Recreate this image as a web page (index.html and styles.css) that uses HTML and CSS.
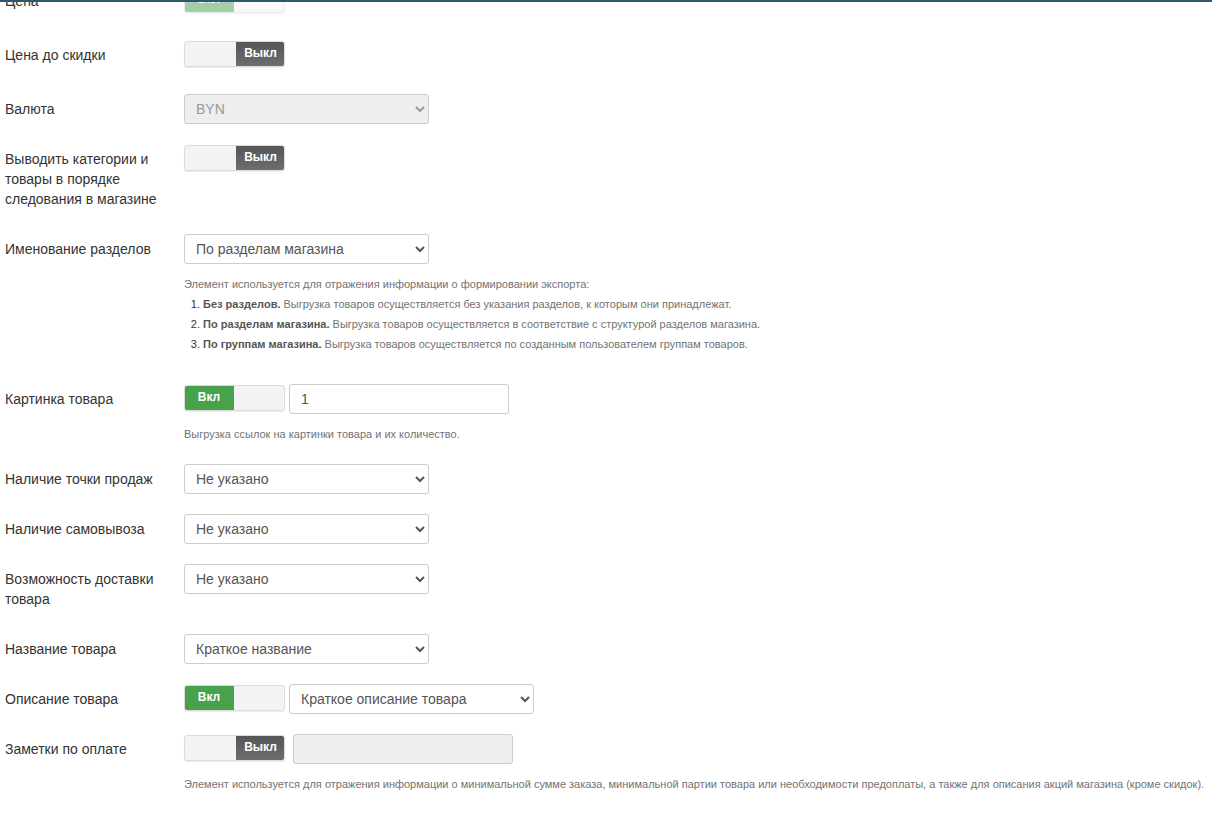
FILE: index.html
```html
<!DOCTYPE html>
<html lang="ru">
<head>
<meta charset="utf-8">
<title>Настройки экспорта</title>
<link rel="stylesheet" href="styles.css">
</head>
<body>
<div class="topline"></div>
<form class="form">
  <div class="row row--toggle">
    <label class="label">Цена</label>
    <div class="control">
      <div class="toggle toggle--on toggle--disabled"><span class="toggle__on">Вкл</span><span class="toggle__blank"></span></div>
    </div>
  </div>

  <div class="row row--toggle">
    <label class="label">Цена до скидки</label>
    <div class="control">
      <div class="toggle toggle--off"><span class="toggle__blank"></span><span class="toggle__off">Выкл</span></div>
    </div>
  </div>

  <div class="row">
    <label class="label">Валюта</label>
    <div class="control">
      <select class="select select--disabled" disabled><option>BYN</option></select>
    </div>
  </div>

  <div class="row">
    <label class="label">Выводить категории и товары в порядке следования в магазине</label>
    <div class="control">
      <div class="toggle toggle--off"><span class="toggle__blank"></span><span class="toggle__off">Выкл</span></div>
    </div>
  </div>

  <div class="row">
    <label class="label">Именование разделов</label>
    <div class="control">
      <select class="select"><option>По разделам магазина</option></select>
      <div class="help">
        <div>Элемент используется для отражения информации о формировании экспорта:</div>
        <ol class="help__list">
          <li><b>Без разделов.</b> Выгрузка товаров осуществляется без указания разделов, к которым они принадлежат.</li>
          <li><b>По разделам магазина.</b> Выгрузка товаров осуществляется в соответствие с структурой разделов магазина.</li>
          <li><b>По группам магазина.</b> Выгрузка товаров осуществляется по созданным пользователем группам товаров.</li>
        </ol>
      </div>
    </div>
  </div>

  <div class="row">
    <label class="label">Картинка товара</label>
    <div class="control">
      <div class="line">
        <div class="toggle toggle--on"><span class="toggle__on">Вкл</span><span class="toggle__blank"></span></div>
        <input class="input" type="text" value="1">
      </div>
      <div class="help">Выгрузка ссылок на картинки товара и их количество.</div>
    </div>
  </div>

  <div class="row">
    <label class="label">Наличие точки продаж</label>
    <div class="control">
      <select class="select"><option>Не указано</option></select>
    </div>
  </div>

  <div class="row">
    <label class="label">Наличие самовывоза</label>
    <div class="control">
      <select class="select"><option>Не указано</option></select>
    </div>
  </div>

  <div class="row">
    <label class="label">Возможность доставки товара</label>
    <div class="control">
      <select class="select"><option>Не указано</option></select>
    </div>
  </div>

  <div class="row">
    <label class="label">Название товара</label>
    <div class="control">
      <select class="select"><option>Краткое название</option></select>
    </div>
  </div>

  <div class="row">
    <label class="label">Описание товара</label>
    <div class="control">
      <div class="line">
        <div class="toggle toggle--on"><span class="toggle__on">Вкл</span><span class="toggle__blank"></span></div>
        <select class="select"><option>Краткое описание товара</option></select>
      </div>
    </div>
  </div>

  <div class="row">
    <label class="label">Заметки по оплате</label>
    <div class="control">
      <div class="line line--wide">
        <div class="toggle toggle--off"><span class="toggle__blank"></span><span class="toggle__off">Выкл</span></div>
        <input class="input input--disabled" type="text" disabled>
      </div>
      <div class="help help--nowrap">Элемент используется для отражения информации о минимальной сумме заказа, минимальной партии товара или необходимости предоплаты, а также для описания акций магазина (кроме скидок).</div>
    </div>
  </div>
</form>
</body>
</html>
```

FILE: styles.css
```css
html, body {
  margin: 0;
  padding: 0;
  background: #fff;
  overflow: hidden;
}

body {
  font-family: "Liberation Sans", Arial, sans-serif;
  font-size: 14px;
  color: #333;
}

.topline {
  position: fixed;
  top: 0;
  left: 0;
  right: 0;
  height: 2px;
  background: #2b5a6d;
  z-index: 5;
}

.form {
  margin-top: -14px;
  padding: 0 5px;
}

.row {
  display: flex;
  gap: 15px;
  margin-bottom: 20px;
}

.row--toggle .control {
  min-height: 34px;
}

.label {
  flex: none;
  width: 164px;
  padding: 5px 0;
  line-height: 20px;
  font-size: 14px;
  color: #333;
}

.control {
  flex: 1;
  min-width: 0;
}

.line {
  display: flex;
  align-items: flex-start;
  gap: 4px;
}

.line--wide {
  gap: 8px;
}

/* toggle */
.toggle {
  display: flex;
  width: 101px;
  height: 26px;
  margin-top: 1px;
  box-sizing: border-box;
  border-radius: 3px;
  overflow: hidden;
  border: 1px solid #dcdcdc;
  box-shadow: 0 1px 1px rgba(0, 0, 0, 0.08);
  background: #f3f3f3;
  font-size: 12px;
  font-weight: bold;
  color: #fff;
  flex: none;
}

.toggle__blank {
  flex: 1;
  background: #f3f3f3;
}

.toggle__off {
  width: 49px;
  margin: -1px -1px -1px 0;
  display: flex;
  align-items: center;
  justify-content: center;
  padding-bottom: 2px;
  background: linear-gradient(#555, #6e6e6e);
  border-radius: 0 3px 3px 0;
}

.toggle__on {
  width: 50px;
  margin: -1px 0 -1px -1px;
  display: flex;
  align-items: center;
  justify-content: center;
  padding-bottom: 2px;
  background: #47a24b;
  border-radius: 3px 0 0 3px;
}

.toggle--disabled {
  opacity: 0.5;
}

/* select & input */
.select {
  display: block;
  width: 245px;
  height: 30px;
  box-sizing: border-box;
  border: 1px solid #ccc;
  border-radius: 3px;
  background: #fff;
  padding: 0 7px;
  font-family: "Liberation Sans", Arial, sans-serif;
  font-size: 14px;
  color: #555;
  flex: none;
}

.select--disabled {
  background: #eee;
  color: #999;
  opacity: 1;
}

.input {
  display: block;
  width: 220px;
  height: 30px;
  box-sizing: border-box;
  border: 1px solid #ccc;
  border-radius: 3px;
  padding: 0 11px;
  font-family: "Liberation Sans", Arial, sans-serif;
  font-size: 14px;
  color: #555;
  background: #fff;
  flex: none;
}

.input--disabled {
  background: #eee;
}

/* help */
.help {
  margin-top: 10px;
  font-size: 11px;
  line-height: 20px;
  color: #737373;
}

.help--nowrap {
  white-space: nowrap;
}

.help__list {
  margin: 0 0 10px;
  padding-left: 19px;
}

.help__list li::marker {
  color: #333;
}

.help__list b {
  color: #555;
}
```
